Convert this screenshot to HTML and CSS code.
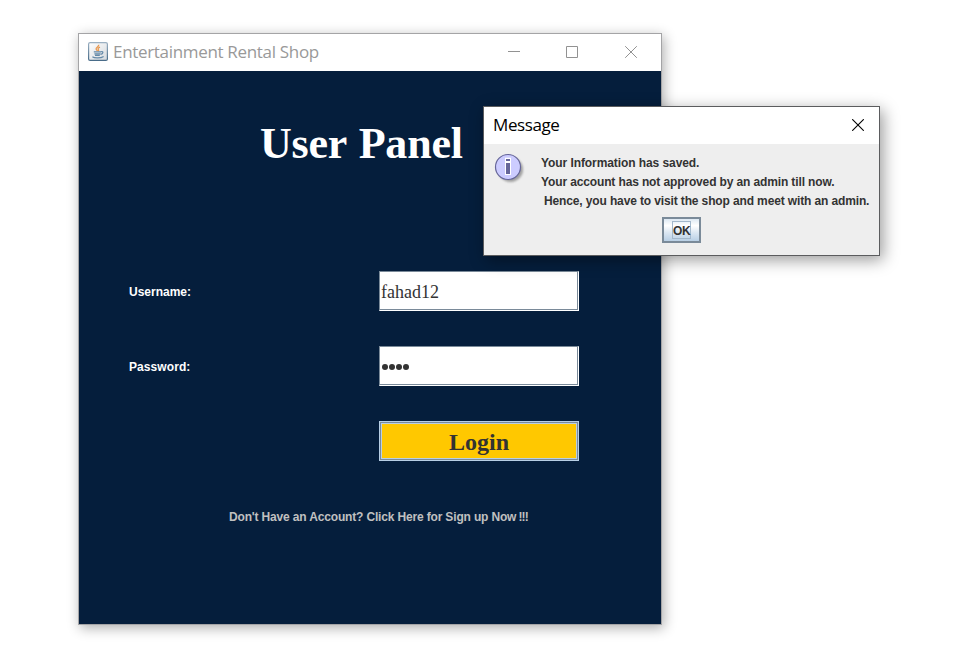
FILE: index.html
```html
<!DOCTYPE html>
<html lang="en">
<head>
<meta charset="utf-8">
<title>Entertainment Rental Shop</title>
<link rel="stylesheet" href="styles.css">
</head>
<body>
<main class="window">
  <header class="titlebar">
    <svg class="app-icon" width="20" height="19" viewBox="0 0 20 19">
      <defs>
        <linearGradient id="tile" x1="0" y1="0" x2="1" y2="1"><stop offset="0" stop-color="#fff"/><stop offset="1" stop-color="#d5d9dd"/></linearGradient>
        <linearGradient id="edge" x1="0" y1="0" x2="0" y2="1"><stop offset="0" stop-color="#9bb0c2"/><stop offset="1" stop-color="#496c89"/></linearGradient>
      </defs>
      <rect x=".6" y=".6" width="18.8" height="17.8" rx="1.5" fill="url(#tile)" stroke="url(#edge)" stroke-width="1.2"/>
      <path d="M10.6 2.8c.8 1.7-3 2.5-2.5 4.3.2.7 1 1.2 1.2 1.8M12 5.2c-2 .8-2.4 1.6-1.6 2.4.5.6.1 1.1-.4 1.4" fill="none" stroke="#e9984f" stroke-width="1.3"/>
      <path d="M5.8 9.8h7.3M6.4 11.8h6M7 13.4h4.8M13.2 9.7c2.4-.6 2.2 2-.6 2.6M4.4 14.8c2 1.6 8.5 1.5 11.2-.4" fill="none" stroke="#6489a8" stroke-width="1.2"/>
    </svg>
    <h2 class="title">Entertainment Rental Shop</h2>
    <svg class="controls" width="130" height="12" viewBox="0 0 130 12" fill="none" stroke="#929292">
      <path d="M0 5.5h12M58.5.5h11v11h-11zM117.2.2l11.6 11.6M128.8.2l-11.6 11.6"/>
    </svg>
  </header>
  <form class="panel">
    <h1 class="heading">User Panel</h1>
    <div class="fields">
      <label class="label" for="user">Username:</label>
      <input class="field" id="user" type="text" value="fahad12">
      <label class="label pass" for="pass">Password:</label>
      <div class="field dots" id="pass"><i></i><i></i><i></i><i></i></div>
      <button class="login" type="button">Login</button>
    </div>
    <a class="signup">Don't Have an Account? Click Here for Sign up Now <span class="bang">!!!</span></a>
  </form>
</main>
<section class="dialog" role="dialog">
  <header class="dialog-bar">
    <h2 class="dialog-title">Message</h2>
    <svg width="12" height="12" viewBox="0 0 12 12" fill="none" stroke="#000" stroke-width="1.1"><path d="M.2.2l11.6 11.6M11.8.2L.2 11.8"/></svg>
  </header>
  <div class="dialog-body">
    <svg class="info" width="34" height="34" viewBox="0 0 34 34">
      <defs><filter id="soft"><feGaussianBlur stdDeviation="1.3"/></filter></defs>
      <circle cx="16.5" cy="16.5" r="12.5" fill="#777" opacity=".65" filter="url(#soft)"/>
      <circle cx="14" cy="14" r="12.5" fill="#ccccff" stroke="#666699" stroke-width="1.2"/>
      <path d="M11 4.8h6v4.4h-6zM11 9.2h6V22h-6z" fill="#fff"/>
      <path d="M12 6h4v2h-4zM12 10h4v11h-4z" fill="#666699"/>
    </svg>
    <div class="message">
      <p class="line one">Your Information has saved.</p>
      <p class="line two">Your account has not approved by an admin till now.</p>
      <p class="line three">Hence, you have to visit the shop and meet with an admin.</p>
    </div>
    <button class="ok" type="button"><span class="ok-text">OK</span></button>
  </div>
</section>
</body>
</html>
```
FILE: styles.css
```css
* { box-sizing: border-box; }
body { margin: 0; height: 652px; overflow: hidden; background: #fff; position: relative; font-family: "Liberation Sans", Arial, sans-serif; }
h1, h2, p { margin: 0; font-weight: normal; white-space: nowrap; }
svg { display: block; flex: none; }
.window { position: absolute; left: 78px; top: 33px; width: 584px; height: 592px; border: 1px solid #a4a4a6; background: #051e3c; box-shadow: 2px 3px 12px rgba(0,0,0,.32); }
.titlebar { display: flex; align-items: center; height: 37px; padding: 0 23px 2px 9px; background: #fff; }
.title { margin-left: 5px; font: 17px/35px "Open Sans", sans-serif; letter-spacing: -.32px; color: #999; }
.controls { margin-left: auto; }
.panel { padding: 43px 50px 0; }
.heading { margin-left: 131px; height: 60px; font: bold 44px/60px "Liberation Serif", serif; letter-spacing: -.2px; word-spacing: 1.5px; color: #fff; }
.fields { display: grid; grid-template-columns: 250px 200px; grid-auto-rows: 40px; row-gap: 35px; align-items: center; margin-top: 97px; }
.label { padding-top: 2px; font-size: 12px; line-height: 14px; font-weight: bold; color: #fff; }
.pass { letter-spacing: .08px; }
.field { width: 200px; height: 40px; margin: 0; padding: 2px 0 0 1px; border: 1px solid; border-color: #7a8a99 #fff #fff #7a8a99; border-radius: 0; outline: 0; background: #fff; box-shadow: inset -1px -1px #7a8a99; font: 18px "Liberation Serif", serif; color: #333; }
.dots { display: flex; align-items: center; gap: 1px; padding: 1px 0 0 2px; }
.dots i { width: 6px; height: 6px; border-radius: 50%; background: #333; }
.login { grid-column: 2; width: 200px; height: 40px; padding: 2px 0 0; border: 1px solid #b8cfe5; border-radius: 0; background: #ffc800; box-shadow: inset 0 0 0 1px #7a8a99, inset 0 0 0 2px #b8cfe5; font: bold 24px "Liberation Serif", serif; color: #333; }
.signup { display: block; margin: 49px 0 0 100px; font-size: 12px; line-height: 14px; font-weight: bold; letter-spacing: -.16px; color: #c0c0c0; white-space: nowrap; }
.bang { margin-left: -1px; letter-spacing: -.9px; }
.dialog { position: absolute; left: 483px; top: 106px; width: 397px; height: 150px; border: 1px solid #5b5c5e; background: #eee; box-shadow: 3px 4px 15px rgba(0,0,0,.4); }
.dialog-bar { display: flex; justify-content: space-between; align-items: center; height: 37px; padding: 0 15px 2px 9px; background: #fff; }
.dialog-title { font: 17px/35px "Open Sans", sans-serif; letter-spacing: -.4px; color: #000; }
.dialog-body { display: grid; grid-template-columns: 47px minmax(0, 1fr); padding: 9px 10px 0; }
.message { padding-top: 1px; }
.line { height: 19px; font-size: 12px; line-height: 19px; font-weight: bold; letter-spacing: -.13px; color: #333; }
.one { letter-spacing: -.08px; }
.three { padding-left: 3px; }
.ok { grid-column: 1 / 3; justify-self: center; display: flex; align-items: center; justify-content: center; width: 39px; height: 26px; margin-top: 6px; padding: 0; border: 2px solid #7a8a99; border-radius: 0; background: linear-gradient(#dde8f3, #fff 30%, #dde8f3 60%, #b8cfe5); }
.ok-text { width: 19px; height: 18px; border: 1px solid #a3b8cc; font: bold 12px/18px "Liberation Sans", sans-serif; text-align: center; letter-spacing: -.3px; color: #333; }
```
